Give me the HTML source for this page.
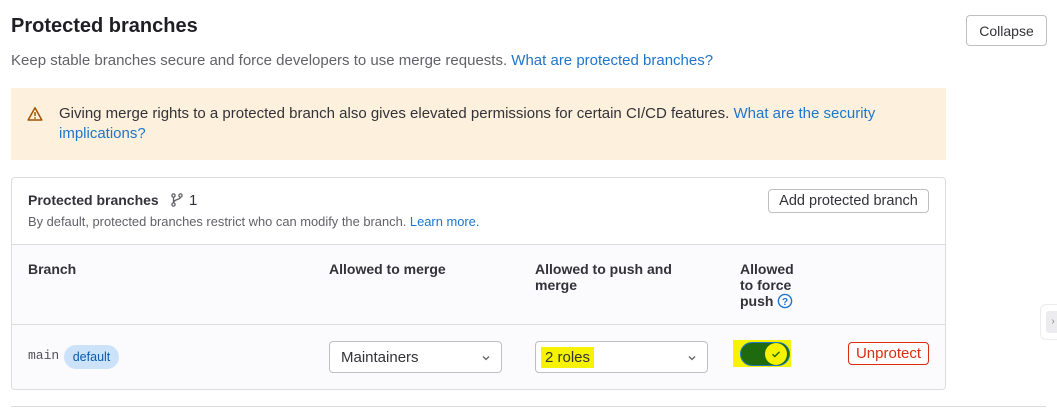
<!DOCTYPE html>
<html><head><style>
*{box-sizing:border-box;margin:0;padding:0}
body{width:1057px;height:414px;background:#fff;font-family:"Liberation Sans",sans-serif;color:#333238;position:relative;overflow:hidden;font-size:14px}
.a{position:absolute}
a{color:#1f75cb;text-decoration:none}
.btn{position:absolute;border:1px solid #bfbfc3;border-radius:4px;background:#fff;font-size:14px;color:#333238;display:flex;align-items:center;justify-content:center}
.sel{position:absolute;border:1px solid #bfbfc3;border-radius:4px;background:#fff;height:32px;font-size:14px;display:flex;align-items:center;padding-left:11px}
.sel svg{position:absolute;right:10px;top:11px}
</style></head><body>
<div class="a" style="left:11px;top:15px;font-size:20px;font-weight:bold;color:#1f1e24">Protected branches</div>
<div class="a" style="left:11px;top:52px;color:#626168;font-size:15px">Keep stable branches secure and force developers to use merge requests. <a>What are protected branches?</a></div>
<div class="btn" style="left:966px;top:15px;width:81px;height:31px">Collapse</div>

<div class="a" style="left:11px;top:88px;width:935px;height:72px;background:#fdf1dd"></div>
<svg class="a" style="left:27px;top:106px" width="16" height="16" viewBox="0 0 16 16"><path d="M8 1.8L14.8 14H1.2Z" fill="none" stroke="#9e5400" stroke-width="1.5" stroke-linejoin="round"/><path d="M8 6v4" stroke="#9e5400" stroke-width="1.5"/><circle cx="8" cy="12" r=".9" fill="#9e5400"/></svg>
<div class="a" style="left:59px;top:104px;width:830px;line-height:20px;color:#333238;font-size:15px">Giving merge rights to a protected branch also gives elevated permissions for certain CI/CD features. <a>What are the security implications?</a></div>

<div class="a" style="left:11px;top:177px;width:935px;height:213px;border:1px solid #dcdcde;border-radius:4px;overflow:hidden">
 <div class="a" style="left:0;top:66px;width:935px;height:146px;background:#fbfafd;border-top:1px solid #dcdcde"></div>
 <div class="a" style="left:0;top:146px;width:935px;border-top:1px solid #dcdcde"></div>
</div>
<div class="a" style="left:28px;top:192px;font-weight:bold;color:#333238">Protected branches</div>
<svg class="a" style="left:170px;top:193px" width="14" height="14" viewBox="0 0 14 14" fill="none" stroke="#626168" stroke-width="1.3"><circle cx="3.5" cy="2.5" r="1.6"/><circle cx="10.5" cy="2.5" r="1.6"/><circle cx="3.5" cy="11.5" r="1.6"/><path d="M3.5 4v6M10.5 4c0 3-7 2-7 6"/></svg>
<div class="a" style="left:189px;top:192px;color:#333238;font-size:15px">1</div>
<div class="a" style="left:28px;top:214px;font-size:12.9px;color:#626168">By default, protected branches restrict who can modify the branch. <a>Learn more.</a></div>
<div class="btn" style="left:768px;top:189px;width:161px;height:24px;font-size:14.5px">Add protected branch</div>

<div class="a" style="left:28px;top:261px;font-weight:bold">Branch</div>
<div class="a" style="left:329px;top:261px;font-weight:bold">Allowed to merge</div>
<div class="a" style="left:535px;top:261px;font-weight:bold;line-height:16px">Allowed to push and<br>merge</div>
<div class="a" style="left:740px;top:261px;font-weight:bold;line-height:16px">Allowed<br>to force<br>push <svg style="vertical-align:-3px" width="16" height="16" viewBox="0 0 16 16"><circle cx="8" cy="8" r="6.6" fill="none" stroke="#1f75cb" stroke-width="1.4"/><text x="8" y="12" font-size="10" font-weight="bold" text-anchor="middle" fill="#1f75cb" font-family="Liberation Sans">?</text></svg></div>

<div class="a" style="left:28px;top:348px;font-family:'Liberation Mono',monospace;font-size:13px;color:#535158">main</div>
<div class="a" style="left:64px;top:345px;width:55px;height:24px;border-radius:12px;background:#cbe2f9;color:#0b5cad;font-size:12.5px;line-height:24px;text-align:center">default</div>
<div class="sel" style="left:329px;top:341px;width:173px;font-size:15px">Maintainers<svg width="10" height="10" viewBox="0 0 10 10"><path d="M2 3.5l3 3 3-3" fill="none" stroke="#626168" stroke-width="1.3"/></svg></div>
<div class="sel" style="left:535px;top:341px;width:173px;font-size:15px"><span style="background:#f5f300;padding:2px 4px;margin-left:-6px;color:#333238">2 roles</span><svg width="10" height="10" viewBox="0 0 10 10"><path d="M2 3.5l3 3 3-3" fill="none" stroke="#626168" stroke-width="1.3"/></svg></div>
<div class="a" style="left:733px;top:340px;width:58px;height:27px;background:#f5f300"></div>
<div class="a" style="left:740px;top:342px;width:50px;height:24px;border-radius:12px;background:#1f6a0f;border:1px solid #1f75cb"></div>
<div class="a" style="left:765px;top:343px;width:22px;height:22px;border-radius:11px;background:#f5f300"></div>
<svg class="a" style="left:770px;top:348px" width="12" height="12" viewBox="0 0 12 12"><path d="M2.5 6.2l2.3 2.3 4.7-4.7" fill="none" stroke="#1f6a0f" stroke-width="1.4"/></svg>
<div class="btn" style="left:848px;top:342px;width:81px;height:23px;border-color:#dd2b0e;color:#dd2b0e;font-size:15px">Unprotect</div>

<div class="a" style="left:11px;top:406px;width:1035px;border-top:1px solid #dcdcde"></div>
<div class="a" style="left:1040px;top:304px;width:30px;height:36px;border:1px solid #ececef;border-radius:6px;background:#fff"></div>
<div class="a" style="left:1046px;top:311px;width:14px;height:22px;background:#ececef;border-radius:3px;color:#89888d;font-size:10px;line-height:22px;text-align:center">›</div>
</body></html>
